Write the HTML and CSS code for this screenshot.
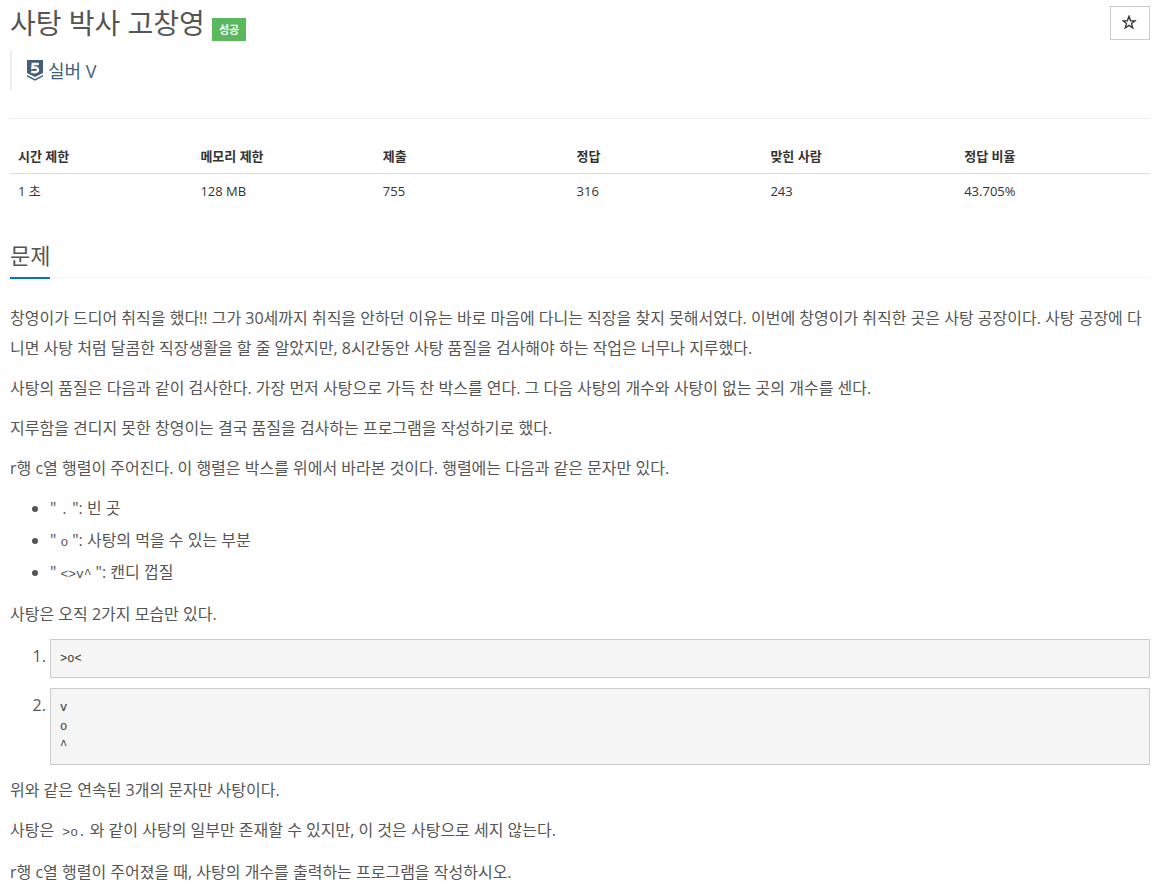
FILE: index.html
```html
<!DOCTYPE html>
<html lang="ko">
<head>
    <meta charset="UTF-8">
    <meta name="viewport" content="width=device-width, initial-scale=1.0">
    <title>사탕 박사 고창영</title>
    <link rel="stylesheet" href="styles.css">
</head>
<body>
    <!-- 문제 제목 -->
    <header class="page-header">
        <div class="title-row">
            <h1>사탕 박사 고창영</h1>
            <span class="label-success">성공</span>
            <button type="button" class="star-btn" aria-label="즐겨찾기">
                <svg width="16" height="16" viewBox="0 0 16 16">
                    <path d="M7 1.2 L8.6 5.8 L13 5.8 L9.5 8.6 L10.8 13 L7 10.4 L3.2 13 L4.5 8.6 L1 5.8 L5.4 5.8 Z" fill="none" stroke="#333" stroke-width="1.3"/>
                </svg>
            </button>
        </div>
        <div class="tier">
            <svg class="tier-icon" width="16" height="21" viewBox="0 0 16 21">
                <path d="M0 0 H16 V13 L8 17 L0 13 Z" fill="#435f7a"/>
                <path d="M0 15 L8 19 L16 15 V16.6 L8 20.8 L0 16.6 Z" fill="#435f7a"/>
                <path d="M11.8 4 H5.8 L5.4 7.9 C8.2 7 11 7.4 11 9.7 C11 12.4 7.4 12.7 4.2 11.6" fill="none" stroke="#fff" stroke-width="2.4"/>
            </svg>
            <span>실버 V</span>
        </div>
    </header>

    <!-- 제한 및 통계 -->
    <table class="info-table">
        <thead>
            <tr>
                <th class="col-limit">시간 제한</th>
                <th class="col-limit">메모리 제한</th>
                <th>제출</th>
                <th>정답</th>
                <th>맞힌 사람</th>
                <th>정답 비율</th>
            </tr>
        </thead>
        <tbody>
            <tr>
                <td>1 초</td>
                <td>128 MB</td>
                <td>755</td>
                <td>316</td>
                <td>243</td>
                <td>43.705%</td>
            </tr>
        </tbody>
    </table>

    <!-- 문제 본문 -->
    <section>
        <div class="headline">
            <h2>문제</h2>
        </div>
        <div class="problem-text">
            <p>창영이가 드디어 취직을 했다!! 그가 30세까지 취직을 안하던 이유는 바로 마음에 다니는 직장을 찾지 못해서였다. 이번에 창영이가 취직한 곳은 사탕 공장이다. 사탕 공장에 다니면 사탕 처럼 달콤한 직장생활을 할 줄 알았지만, 8시간동안 사탕 품질을 검사해야 하는 작업은 너무나 지루했다.</p>
            <p>사탕의 품질은 다음과 같이 검사한다. 가장 먼저 사탕으로 가득 찬 박스를 연다. 그 다음 사탕의 개수와 사탕이 없는 곳의 개수를 센다.</p>
            <p>지루함을 견디지 못한 창영이는 결국 품질을 검사하는 프로그램을 작성하기로 했다.</p>
            <p>r행 c열 행렬이 주어진다. 이 행렬은 박스를 위에서 바라본 것이다. 행렬에는 다음과 같은 문자만 있다.</p>
            <ul>
                <li>"<code>.</code>": 빈 곳</li>
                <li>"<code>o</code>": 사탕의 먹을 수 있는 부분</li>
                <li>"<code>&lt;&gt;v^</code>": 캔디 껍질</li>
            </ul>
            <p>사탕은 오직 2가지 모습만 있다.</p>
            <ol>
                <li><pre>&gt;o&lt;</pre></li>
                <li><pre>v
o
^</pre></li>
            </ol>
            <p>위와 같은 연속된 3개의 문자만 사탕이다.</p>
            <p>사탕은 <code>&gt;o.</code>와 같이 사탕의 일부만 존재할 수 있지만, 이 것은 사탕으로 세지 않는다.</p>
            <p>r행 c열 행렬이 주어졌을 때, 사탕의 개수를 출력하는 프로그램을 작성하시오.</p>
        </div>
    </section>
</body>
</html>
```
FILE: styles.css
```css
/* 기본 스타일 */
* {
    box-sizing: border-box;
}

body {
    margin: 0;
    padding: 6px 6px 0 10px;
    background-color: #fff;
    color: #333;
    font-family: "Open Sans", "Noto Sans CJK KR", sans-serif;
    font-size: 13px;
    line-height: 18px;
}

/* 제목 */
.page-header {
    padding-bottom: 28px;
    border-bottom: 1px solid #eee;
}

.title-row {
    display: flex;
    align-items: flex-start;
    gap: 7px;
}

h1 {
    margin: 0;
    font-size: 28px;
    font-weight: 400;
    line-height: 34px;
    color: #555;
}

.label-success {
    margin-top: 12px;
    padding: 0 7px;
    background-color: #5cb85c;
    color: #fff;
    font-size: 11px;
    font-weight: 700;
    line-height: 23px;
}

.star-btn {
    display: flex;
    align-items: center;
    justify-content: center;
    width: 40px;
    height: 34px;
    margin-left: auto;
    padding: 0;
    background-color: #fff;
    border: 1px solid #ccc;
    cursor: pointer;
}

.tier {
    display: flex;
    align-items: center;
    gap: 5px;
    height: 39px;
    margin-top: 10px;
    padding-left: 15px;
    border-left: 2px solid #eee;
    color: #435f7a;
    font-size: 18px;
}

/* 정보 표 */
.info-table {
    width: 100%;
    margin-top: 20px;
    border-collapse: collapse;
    table-layout: fixed;
}

.info-table th,
.info-table td {
    width: 17%;
    padding: 8px;
    text-align: left;
}

.info-table .col-limit {
    width: 16%;
}

.info-table th {
    border-bottom: 1px solid #ddd;
    font-weight: 700;
}

/* 섹션 제목 */
.headline {
    display: flex;
    margin: 31px 0 25px;
    border-bottom: 1px dotted #e4e9f0;
}

h2 {
    margin: 0 0 -2px;
    padding-bottom: 6px;
    border-bottom: 2px solid #0076c0;
    color: #555;
    font-size: 22px;
    font-weight: 400;
    line-height: 32px;
}

/* 본문 */
.problem-text {
    color: #555;
    font-size: 16px;
    line-height: 30px;
}

.problem-text p {
    margin: 0 0 10px;
}

.problem-text ul,
.problem-text ol {
    margin: 0 0 10px;
    padding-left: 40px;
}

code {
    padding: 2px 4px;
    font-family: "Liberation Mono", monospace;
    font-size: 13px;
    line-height: 28px;
}

pre {
    margin: 0 0 10px;
    padding: 10px 9px 8px;
    background-color: #f5f5f5;
    border: 1px solid #ccc;
    color: #333;
    font-family: "Liberation Mono", monospace;
    font-size: 12px;
    line-height: 19px;
}
```
